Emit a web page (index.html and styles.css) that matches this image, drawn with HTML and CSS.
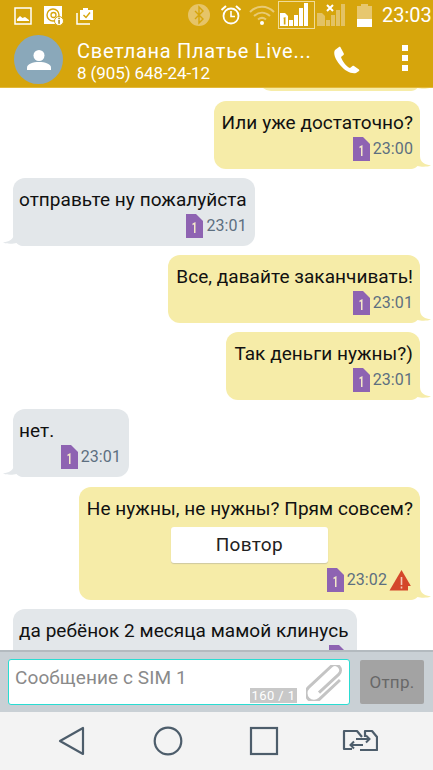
FILE: index.html
```html
<!DOCTYPE html>
<html lang="ru">
<head>
<meta charset="utf-8">
<title>Сообщения</title>
<link rel="stylesheet" href="styles.css">
</head>
<body>
<svg class="defs" width="0" height="0" aria-hidden="true">
  <defs>
    <symbol id="tail-r" viewBox="0 0 24 14"><path d="M0 0H12C12 5 13 9 23 10.500C20 12 13 12 9.500 11C8 13 5 14 3 14H0Z"/></symbol>
    <symbol id="tail-l" viewBox="0 0 24 14"><path d="M24 0H12C12 5 11 9 1 10.500C4 12 11 12 14.500 11C16 13 19 14 21 14H24Z"/></symbol>
    <symbol id="sim" viewBox="0 0 17 24"><path d="M0 0H10L17 7V24H0Z" fill="#8e63b2"/><path d="M6.500 9.500L9.500 8V19H8V10.500L6.500 11.200Z" fill="#f3e9c8"/></symbol>
  </defs>
</svg>
<div class="phone">
  <header class="topbar">
    <div class="status">
      <div class="notif">
        <svg class="ic-pic" width="18" height="18" viewBox="0 0 18 18"><rect x="1" y="1" width="16" height="16" fill="none" stroke="#fff" stroke-width="1.500"/><path d="M3 14V12L6 9L8.500 11L11 10L15 13V14Z" fill="#fff"/></svg>
        <svg class="ic-at" width="20" height="20" viewBox="0 0 20 20"><rect x="0" y="0" width="18" height="18" fill="#fff"/><circle cx="9" cy="9" r="6" fill="none" stroke="#d6a50c" stroke-width="1.400"/><circle cx="9.500" cy="9" r="2.500" fill="none" stroke="#d6a50c" stroke-width="1.300"/><circle cx="15" cy="15" r="4.500" fill="#fff" stroke="#d6a50c"/><rect x="14.300" y="13.800" width="1.500" height="4" fill="#a98610"/><rect x="14.300" y="11.700" width="1.500" height="1.300" fill="#a98610"/></svg>
        <svg class="ic-task" width="18" height="18" viewBox="0 0 18 18"><path d="M4 3H7V1H12V3H17V13H4Z" fill="#fff"/><path d="M1 6V17H14" fill="none" stroke="#fff" stroke-width="1.500"/><path d="M7.500 8L10 10.500L14 5.500" fill="none" stroke="#d6a50c" stroke-width="1.400"/></svg>
      </div>
      <div class="sys">
        <svg width="22" height="22" viewBox="0 0 22 22"><circle cx="11" cy="11" r="11" fill="#e6c468"/><path d="M7 7L15 15L11 19V3L15 7L7 15" fill="none" stroke="#d6a50c" stroke-width="1.400"/></svg>
        <svg class="alarm" width="22" height="22" viewBox="0 0 22 22"><circle cx="11" cy="12" r="7.500" fill="none" stroke="#fff" stroke-width="1.800"/><path d="M11 7V12.500H15" fill="none" stroke="#fff" stroke-width="1.600"/><path d="M1.500 6L6 2M20.500 6L16 2" stroke="#fff" stroke-width="2"/></svg>
        <svg class="wifi" width="26" height="20" viewBox="0 0 26 20"><path d="M1 7C8 0 18 0 25 7M5 11C10 6.500 16 6.500 21 11M9 14.500C11.500 12.500 14.500 12.500 17 14.500" fill="none" stroke="#e8ca74" stroke-width="2"/><circle cx="13" cy="18" r="2" fill="#fff"/></svg>
        <div class="sig-box">
          <svg width="35" height="26" viewBox="0 0 35 26"><path d="M1 11H6L9 14V24H1Z" fill="#fff"/><path d="M4 16L6.500 15V22.500H4.800V16.500Z" fill="#d6a50c"/><rect x="10" y="18" width="4" height="6" fill="#fff"/><rect x="15" y="13" width="4" height="11" fill="#fff"/><rect x="20" y="6" width="4" height="18" fill="#fff"/><rect x="25" y="1" width="4" height="23" fill="#fff"/></svg>
        </div>
        <svg class="sig2" width="33" height="26" viewBox="0 0 33 26"><path d="M1 11H6L9 14V24H1Z" fill="#e3c264"/><rect x="10" y="18" width="4" height="6" fill="#e3c264"/><rect x="15" y="13" width="4" height="11" fill="#e3c264"/><rect x="20" y="8" width="4" height="16" fill="#e3c264"/><rect x="25" y="2" width="4" height="22" fill="#e3c264"/><path d="M11 3L17 9M17 3L11 9" stroke="#fff" stroke-width="2"/></svg>
        <svg class="batt" width="15" height="23" viewBox="0 0 15 23"><path d="M4 0H11V2H15V23H0V2H4Z" fill="#e7c76e"/><rect y="15" width="15" height="8" fill="#fff"/></svg>
        <span class="clock">23:03</span>
      </div>
    </div>
    <div class="contact">
      <div class="avatar">
        <svg width="26" height="24" viewBox="0 0 26 24"><circle cx="13" cy="7.500" r="5.500" fill="#fff"/><path d="M1 22V19.500C1 16 7 14 13 14S25 16 25 19.500V22Z" fill="#fff"/></svg>
      </div>
      <div class="who">
        <div class="name">Светлана Платье Live...</div>
        <div class="num">8 (905) 648-24-12</div>
      </div>
      <svg class="call" width="27" height="28" viewBox="0 0 27 28"><path d="M6 1L2 4C0 7 2 13 7 19C12 25 18 28 23 27L26 25C26.500 24.500 26.500 24 26 23.500L21 20C20.500 19.700 20 19.700 19.500 20L17 22C14 21 9 15 8 11L10.500 9C11 8.500 11 8 10.800 7.500L7.500 1.200C7 .6 6.500 .6 6 1Z" fill="#fff"/></svg>
      <div class="more"><i></i><i></i><i></i></div>
    </div>
  </header>

  <main class="thread">
    <div class="msg out first"><svg class="tail"><use href="#tail-r"/></svg></div>
    <div class="msg out"><div class="text">Или уже достаточно?</div><div class="meta"><svg class="sim"><use href="#sim"/></svg><span>23:00</span></div><svg class="tail"><use href="#tail-r"/></svg></div>
    <div class="msg in"><div class="text">отправьте ну пожалуйста</div><div class="meta"><svg class="sim"><use href="#sim"/></svg><span>23:01</span></div><svg class="tail"><use href="#tail-l"/></svg></div>
    <div class="msg out"><div class="text">Все, давайте заканчивать!</div><div class="meta"><svg class="sim"><use href="#sim"/></svg><span>23:01</span></div><svg class="tail"><use href="#tail-r"/></svg></div>
    <div class="msg out"><div class="text">Так деньги нужны?)</div><div class="meta"><svg class="sim"><use href="#sim"/></svg><span>23:01</span></div><svg class="tail"><use href="#tail-r"/></svg></div>
    <div class="msg in short"><div class="text">нет.</div><div class="meta"><svg class="sim"><use href="#sim"/></svg><span>23:01</span></div><svg class="tail"><use href="#tail-l"/></svg></div>
    <div class="msg out failed">
      <div class="text">Не нужны, не нужны? Прям совсем?</div>
      <button class="retry" type="button">Повтор</button>
      <div class="meta"><svg class="sim"><use href="#sim"/></svg><span>23:02</span>
        <svg class="warn" width="25" height="22" viewBox="0 0 25 22"><path d="M12.500 1L24.500 21.500H.5Z" fill="#d4472a"/><rect x="11.700" y="8" width="1.600" height="8" fill="#f4c9b8"/><rect x="11.700" y="17.500" width="1.600" height="2" fill="#f4c9b8"/></svg>
      </div>
      <svg class="tail"><use href="#tail-r"/></svg>
    </div>
    <div class="msg in"><div class="text">да ребёнок 2 месяца мамой клинусь</div><div class="meta"><svg class="sim"><use href="#sim"/></svg></div><svg class="tail"><use href="#tail-l"/></svg></div>
  </main>

  <form class="composer">
    <div class="input">
      <span class="placeholder">Сообщение с SIM 1</span>
      <span class="counter">160 / 1</span>
      <svg class="clip" width="38" height="36" viewBox="0 0 38 36"><g transform="translate(19 18) rotate(-43) translate(-23 -9)"><path d="M12 12H39A5.500 5.500 0 0 0 39 1H8A8 8 0 0 0 8 17H36" fill="none" stroke="#c4c4c4" stroke-width="3"/></g></svg>
    </div>
    <button class="send" type="button">Отпр.</button>
  </form>

  <nav class="navbar">
    <svg class="nav-back" width="28" height="30" viewBox="0 0 28 30"><path d="M25 2V28L2 15Z" fill="none" stroke="#4d5d6b" stroke-width="2.200" stroke-linejoin="round"/></svg>
    <svg width="30" height="30" viewBox="0 0 30 30"><circle cx="15" cy="15" r="13.300" fill="none" stroke="#4d5d6b" stroke-width="2.200"/></svg>
    <svg width="30" height="30" viewBox="0 0 30 30"><rect x="2" y="2" width="26" height="26" fill="none" stroke="#4d5d6b" stroke-width="2.200"/></svg>
    <svg class="nav-apps" width="36" height="24" viewBox="0 0 36 24"><path d="M10 20H2V2H15L20 8M23 8V2H30L35 8V21H18" fill="none" stroke="#4d5d6b" stroke-width="2.200" stroke-linejoin="round"/><path d="M14 10H27M24 6.500L27.500 10L24 13.500M21 16H9M12 12.500L8.500 16L12 19.500" fill="none" stroke="#4d5d6b" stroke-width="2"/></svg>
  </nav>
</div>
</body>
</html>
```
FILE: styles.css
```css
* { box-sizing: border-box; }
html, body { margin: 0; padding: 0; }
body { width: 433px; height: 770px; overflow: hidden; font-family: Roboto, "Noto Sans", sans-serif; background: #fff; }
.defs { position: absolute; }
.phone { width: 433px; height: 770px; display: flex; flex-direction: column; }

.topbar { height: 88px; flex: none; background: #d6a50c; border-bottom: 1px solid #e3b93a; color: #fff; }
.status { height: 29px; padding: 1px 5px 0 14px; display: flex; justify-content: space-between; align-items: center; }
.notif { display: flex; align-items: center; gap: 12px; margin-top: 1px; }
.sys { display: flex; align-items: center; }
.alarm { margin-left: 10px; }
.wifi { margin-left: 7px; }
.sig-box { width: 37px; height: 28px; margin-left: 3px; border: 1px solid #f0dc98; display: flex; }
.sig2 { margin-left: 1px; }
.batt { margin-left: 8px; }
.clock { font-size: 20px; width: 46px; margin-left: 10px; }

.contact { height: 58px; padding: 6px 16px 0 14px; display: flex; align-items: flex-start; }
.avatar { width: 49px; height: 49px; border-radius: 50%; background: #8aa8ba; display: flex; align-items: center; justify-content: center; flex: none; }
.who { width: 240px; margin-left: 14px; margin-top: 4px; white-space: nowrap; }
.name { font-size: 20px; line-height: 25px; letter-spacing: .72px; }
.num { font-size: 17px; line-height: 19px; letter-spacing: -.1px; }
.call { margin: 11px 0 0 16px; flex: none; }
.more { margin: 10px 0 0 42px; display: flex; flex-direction: column; gap: 4px; }
.more i { width: 6px; height: 6px; background: #fff; display: block; }

.thread { height: 562px; flex: none; overflow: hidden; padding: 0 13px; display: flex; flex-direction: column; gap: 9px; background: #fff; }
.msg { position: relative; border-radius: 12px; flex: none; }
.msg.out { align-self: flex-end; background: #f6eca8; fill: #f6eca8; padding: 8px 7px 0 8px; }
.msg.in { align-self: flex-start; background: #e3e7ea; fill: #e3e7ea; padding: 8px 8px 0 6px; }
.msg.first { margin-top: -57px; margin-bottom: 1px; width: 161px; height: 60px; }
.msg.short { width: 116px; }
.text { font-size: 19px; line-height: 27px; color: #111; white-space: nowrap; letter-spacing: .04px; }
.meta { height: 33px; display: flex; justify-content: flex-end; align-items: flex-start; padding-top: 1px; font-size: 16px; line-height: 24px; color: #5d6f80; letter-spacing: .1px; }
.sim { width: 17px; height: 24px; margin-right: 3px; }
.tail { position: absolute; width: 24px; height: 14px; bottom: 0; }
.out .tail { right: -12px; }
.in .tail { left: -11px; }

.failed { margin-top: 1px; }
.retry { display: block; width: 157px; height: 36px; margin: 5px 0 0 84px; background: #fff; border: 0; border-radius: 3px; box-shadow: 0 1px 1px #cfc9a0; font: 19px/36px Roboto, sans-serif; color: #222; letter-spacing: .3px; padding: 0; }
.failed .meta { height: 37px; padding-top: 5px; }
.warn { margin-left: 2px; margin-top: 1px; margin-right: -1px; }

.composer { height: 62px; flex: none; background: #c9d0d5; border-top: 2px solid #b3babf; padding: 7px 9px 0 8px; display: flex; gap: 10px; }
.input { position: relative; width: 342px; height: 46px; background: #fff; border: 1px solid #2adcd2; border-radius: 3px; }
.placeholder { position: absolute; left: 6px; top: 6px; font-size: 19px; line-height: 24px; color: #8a8a8a; letter-spacing: .1px; }
.counter { position: absolute; left: 241px; top: 28px; width: 47px; height: 15px; background: #c8c8c8; color: #fff; font-size: 13px; line-height: 15px; text-align: center; letter-spacing: .4px; }
.clip { position: absolute; right: 5px; top: 5px; }
.send { width: 64px; height: 44px; margin-top: 1px; border: 0; border-radius: 2px; background: #a3a3a3; color: #686868; font: 17px Roboto, sans-serif; letter-spacing: .3px; padding: 0; }

.navbar { height: 58px; flex: none; background: #f3f3f3; display: flex; align-items: center; padding: 0 0 0 58px; gap: 66px; }
.nav-back { margin-right: 1px; }
.nav-apps { margin-left: -3px; }
```
